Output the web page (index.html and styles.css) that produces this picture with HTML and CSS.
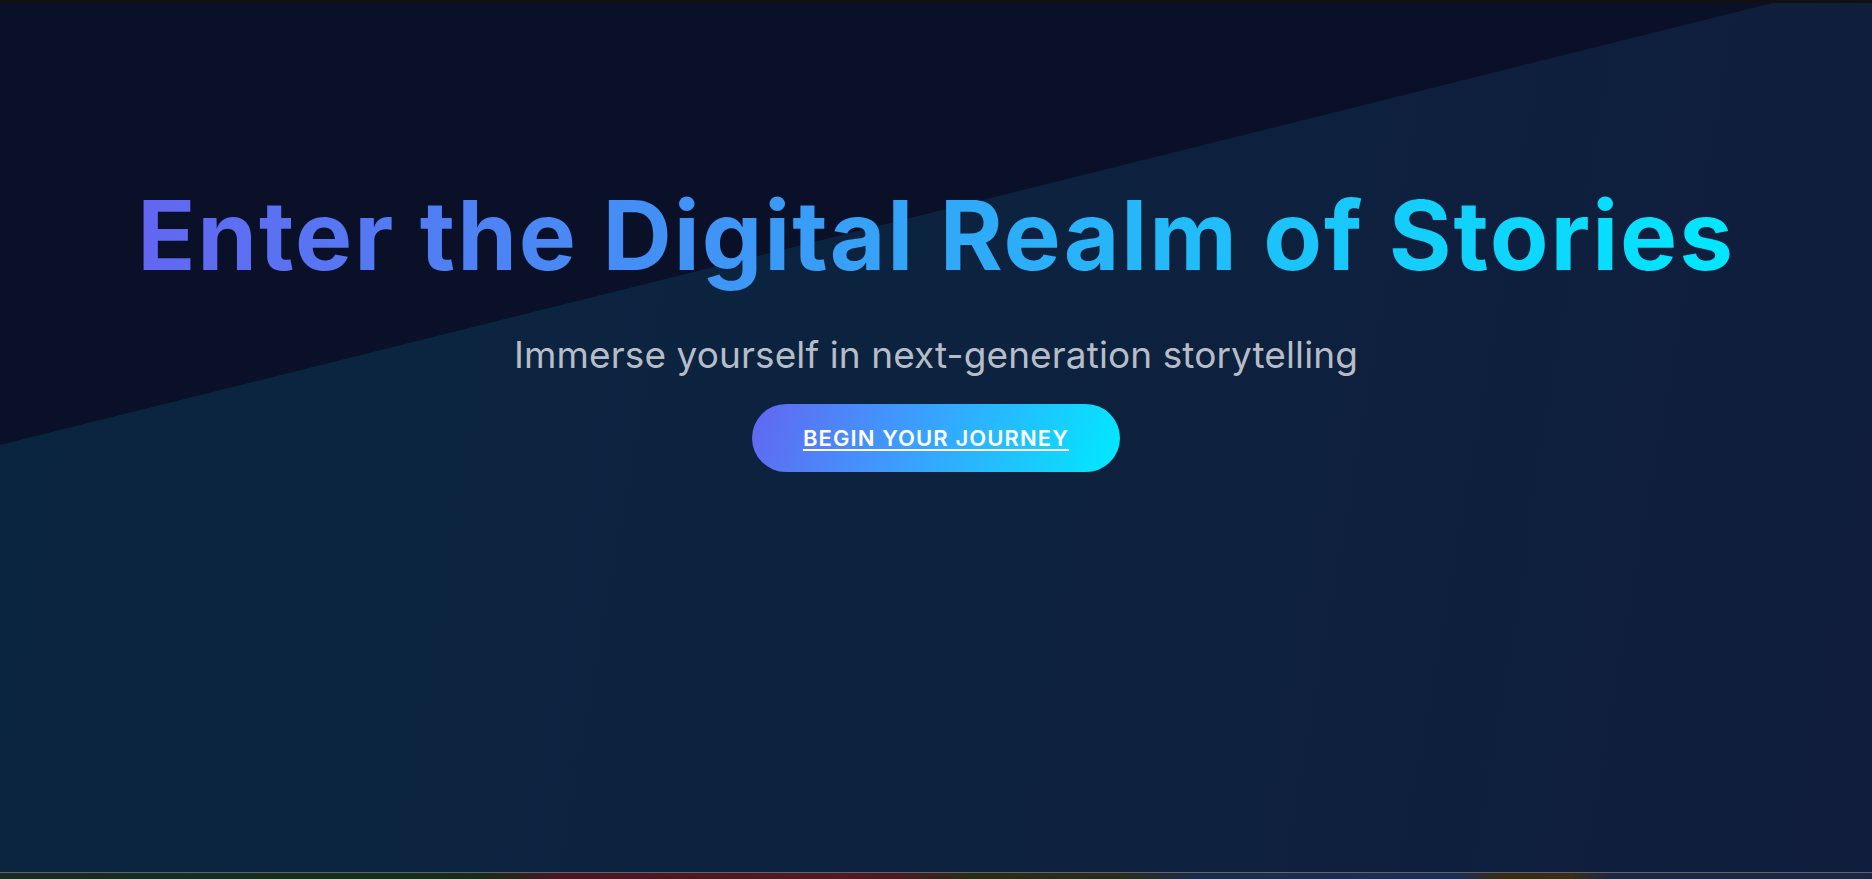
FILE: index.html
```html
<!DOCTYPE html>
<html lang="en">
<head>
<meta charset="utf-8">
<title>Enter the Digital Realm of Stories</title>
<link rel="stylesheet" href="styles.css">
</head>
<body>
<div class="topbar"></div>
<section class="hero">
  <div class="hero-content">
    <h1 class="hero-title">Enter the Digital Realm of Stories</h1>
    <p class="hero-subtitle">Immerse yourself in next-generation storytelling</p>
    <a class="hero-button" href="#journey">Begin Your Journey</a>
  </div>
</section>
<section class="next-section" id="journey"></section>
</body>
</html>
```
FILE: styles.css
```css
* {
  box-sizing: border-box;
}

html, body {
  margin: 0;
  padding: 0;
  background: #111111;
  overflow: hidden;
}

body {
  font-family: Inter, "Noto Sans", "Liberation Sans", sans-serif;
}

.topbar {
  height: 3px;
  background: #111111;
}

.hero {
  position: relative;
  height: 869px;
  background: #0b1029;
  overflow: hidden;
}

.hero::before {
  content: "";
  position: absolute;
  inset: 0;
  background: linear-gradient(100deg, #0a2540 0%, #0c2340 45%, #101d3c 100%);
  clip-path: polygon(0 50.86%, 94.71% 0, 100% 0, 100% 100%, 0 100%);
}

.hero-content {
  position: relative;
  display: flex;
  flex-direction: column;
  align-items: center;
  padding-top: 175px;
  text-align: center;
}

.hero-title {
  margin: 0;
  font-size: 96px;
  line-height: 1.2;
  font-weight: 700;
  letter-spacing: 1.9px;
  background: linear-gradient(90deg, #6366f1 0%, #00e8ff 100%);
  -webkit-background-clip: text;
  background-clip: text;
  color: transparent;
}

.hero-subtitle {
  margin: 40px 0 0;
  font-size: 37px;
  line-height: 1.2;
  font-weight: 400;
  letter-spacing: 0.1px;
  color: #b7bdc7;
}

.hero-button {
  margin-top: 26px;
  display: inline-block;
  padding: 21px 51px;
  border-radius: 40px;
  background: linear-gradient(110deg, #6366f1 0%, #3aa0ff 45%, #00eaff 100%);
  color: #ffffff;
  font-size: 22px;
  line-height: 1.2;
  font-weight: 600;
  letter-spacing: 1.1px;
  text-transform: uppercase;
  text-decoration: underline;
  text-underline-offset: 3px;
}

.next-section {
  height: 7px;
  border-top: 1px solid #5d6472;
  background: linear-gradient(90deg, #1a2a22 0%, #152e1b 22%, #1b2a1a 26%, #4a1621 30%, #521a24 45%, #4a1a22 48%, #2c2a16 52%, #2a2b1c 60%, #1d2b4a 64%, #1e2d52 78%, #3a2a18 80%, #3a2b1a 84%, #202640 86%, #1d2540 100%);
}
```
